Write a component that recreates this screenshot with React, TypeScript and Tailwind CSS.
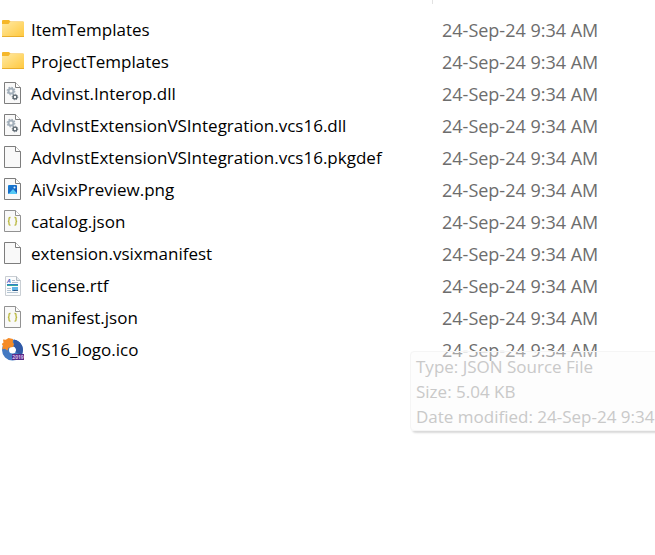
import React from 'react';

type IconKind = 'folder' | 'dll' | 'blank' | 'image' | 'json' | 'rtf' | 'logo';

interface FileEntry {
  name: string;
  icon: IconKind;
  modified: string;
}

const files: FileEntry[] = [
  { name: 'ItemTemplates', icon: 'folder', modified: '24-Sep-24 9:34 AM' },
  { name: 'ProjectTemplates', icon: 'folder', modified: '24-Sep-24 9:34 AM' },
  { name: 'Advinst.Interop.dll', icon: 'dll', modified: '24-Sep-24 9:34 AM' },
  { name: 'AdvInstExtensionVSIntegration.vcs16.dll', icon: 'dll', modified: '24-Sep-24 9:34 AM' },
  { name: 'AdvInstExtensionVSIntegration.vcs16.pkgdef', icon: 'blank', modified: '24-Sep-24 9:34 AM' },
  { name: 'AiVsixPreview.png', icon: 'image', modified: '24-Sep-24 9:34 AM' },
  { name: 'catalog.json', icon: 'json', modified: '24-Sep-24 9:34 AM' },
  { name: 'extension.vsixmanifest', icon: 'blank', modified: '24-Sep-24 9:34 AM' },
  { name: 'license.rtf', icon: 'rtf', modified: '24-Sep-24 9:34 AM' },
  { name: 'manifest.json', icon: 'json', modified: '24-Sep-24 9:34 AM' },
  { name: 'VS16_logo.ico', icon: 'logo', modified: '24-Sep-24 9:34 AM' },
];

function Sheet({ stroke = '#7d7d7d' }: { stroke?: string }) {
  return (
    <>
      <path d="M4.5 1.5h11l5 5v16h-16z" fill="#f9f9f9" stroke={stroke} />
      <path d="M15.5 1.5v5h5" fill="#fff" stroke={stroke} />
    </>
  );
}

function FileIcon({ kind }: { kind: IconKind }) {
  return (
    <svg viewBox="0 0 24 24" className="block h-6 w-6 shrink-0" aria-hidden="true">
      {kind === 'folder' && (
        <>
          <defs>
            <linearGradient id="folder-front" x1="0" y1="0" x2="1" y2="1">
              <stop offset="0" stopColor="#ffe9a2" />
              <stop offset="1" stopColor="#ffc83d" />
            </linearGradient>
          </defs>
          <path d="M2 4q0-1 1-1h6l1.5 1.5H23q1 0 1 1V8H2z" fill="#f5b72a" />
          <path d="M2 7h6.5L10 5h14v15H2z" fill="url(#folder-front)" />
          <path d="M2 19h22v.5q0 .5-1 .5H3q-1 0-1-.5z" fill="#e9ae2c" />
        </>
      )}
      {kind === 'blank' && <Sheet />}
      {kind === 'dll' && (
        <>
          <Sheet />
          <circle cx="11" cy="10" r="2.5" fill="none" stroke="#a3afba" strokeWidth="2" />
          <circle cx="11" cy="10" r="3.8" fill="none" stroke="#a3afba" strokeWidth="1.2" strokeDasharray="1.49 1.49" />
          <circle cx="15" cy="16" r="1.9" fill="none" stroke="#59656e" strokeWidth="1.4" />
          <circle cx="15" cy="16" r="2.8" fill="none" stroke="#59656e" strokeWidth=".8" strokeDasharray="1.1 1.1" />
        </>
      )}
      {kind === 'image' && (
        <>
          <defs>
            <linearGradient id="picture-sky" x1="0" y1="0" x2="1" y2="1">
              <stop offset="0" stopColor="#1680d8" />
              <stop offset="1" stopColor="#1553b5" />
            </linearGradient>
          </defs>
          <Sheet />
          <rect x="8" y="8" width="9" height="9" rx="1" fill="url(#picture-sky)" />
          <path d="m8.5 17 4.5-5 4 4.2q0 .8-1 .8z" fill="#55c9f5" />
          <circle cx="14.5" cy="10.5" r="1" fill="#d9f3ff" />
        </>
      )}
      {kind === 'json' && (
        <>
          <Sheet stroke="#929292" />
          <path
            d="M10.5 8.5h-.6q-.9 0-.9 1v1.6q0 1-1 1.2 1 .2 1 1.2v1.6q0 1 .9 1h.6M14.5 8.5h.6q.9 0 .9 1v1.6q0 1 1 1.2-1 .2-1 1.2v1.6q0 1-.9 1h-.6"
            fill="none"
            stroke="#b9b73c"
            strokeWidth="1.3"
          />
        </>
      )}
      {kind === 'rtf' && (
        <>
          <path d="M5.5 3.5h11l4 4v15h-15z" fill="#fbfcfd" stroke="#c9ced3" />
          <path d="M16.5 3.5v4h4" fill="#e6eaee" stroke="#b5bcc3" />
          <text x="7" y="10" fontSize="6" fontStyle="italic" fontWeight="700" fill="#4d5fc0">A</text>
          <path d="M12 7.5h3M12 9.5h6" stroke="#b3bfd0" />
          <path d="M7 11.5h11" stroke="#2f7fc6" />
          <path d="M7 12.5h11" stroke="#35a99b" />
          <path d="M7 15.5h4M7 17.5h4M7 19.5h11" stroke="#b3c4d2" />
          <rect x="12" y="14" width="6" height="4" fill="#5fb4e6" />
          <path d="m12 18 2-1 4 .3v.7z" fill="#2b4f78" />
        </>
      )}
      {kind === 'logo' && (
        <>
          <circle cx="12.5" cy="13" r="7" fill="none" stroke="#4379c2" strokeWidth="7" />
          <path d="M14 2.6a10.5 10.5 0 0 1 7.5 15.7l-6-3.3a3.5 3.5 0 0 0-2-5.4z" fill="#3159a6" />
          <path d="m3 2.5 2.8.2L8.5 1l4.5 1-.2 3.5 1.2 1.5-1 3-4.5.8-1 2.7-2.8-1.7-2.5.4.8-3.2L1.8 7l1.7-1.5z" fill="#f58b27" />
          <rect x="12" y="17" width="12" height="6" fill="#552b88" />
          <text x="18" y="21.8" fontSize="5" fontWeight="700" textAnchor="middle" fill="#d5bce9">2019</text>
        </>
      )}
    </svg>
  );
}

function FileRow({ file }: { file: FileEntry }) {
  return (
    <tr className="h-8">
      <td className="p-0 align-top">
        <div className="flex gap-[7px]">
          <div className="pt-[3px]">
            <FileIcon kind={file.icon} />
          </div>
          <span className="text-[17px] leading-8 text-black">{file.name}</span>
        </div>
      </td>
      <td className="p-0 align-top leading-8 text-[#6d6d6d]">{file.modified}</td>
    </tr>
  );
}

function FileTooltip() {
  return (
    <div
      role="tooltip"
      className="absolute top-[351px] left-[410px] rounded-sm border border-[#f5f5f5] bg-[#fbfbfb]/40 pt-0.5 pb-px pl-[5px] text-[17px] leading-[25px] text-[#c9c9c9] shadow-[2px_2px_2px_rgba(0,0,0,0.15)]"
    >
      <p>Type: JSON Source File</p>
      <p>Size: 5.04 KB</p>
      <p>Date modified: 24-Sep-24 9:34 AM</p>
    </div>
  );
}

export default function App() {
  return (
    <main className="relative min-h-screen overflow-hidden bg-white font-['Open_Sans','Noto_Sans',sans-serif] text-lg whitespace-nowrap">
      {/* Column divider */}
      <div className="flex h-[14px]">
        <div className="h-1 w-[433px] border-r border-[#e2e2e2]" />
      </div>
      <table className="w-full table-fixed border-collapse">
        <colgroup>
          <col className="w-[442px]" />
          <col />
        </colgroup>
        <tbody>
          {files.map((file) => (
            <FileRow key={file.name} file={file} />
          ))}
        </tbody>
      </table>
      <FileTooltip />
    </main>
  );
}
